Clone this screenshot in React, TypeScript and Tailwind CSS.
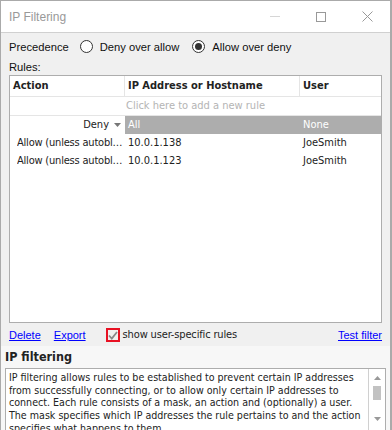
import React from "react";

const ui = { fontFamily: '"Liberation Sans", Arial, sans-serif' };
const tah = { fontFamily: '"DejaVu Sans Condensed", "DejaVu Sans", sans-serif' };

const TitleBar = () => (
  <div className="h-[32px] bg-white border-b border-[#d0d0d0] flex items-center shrink-0">
    <span className="pl-[8px] text-[12px] text-[#999]" style={ui}>
      IP Filtering
    </span>
    <div className="ml-auto flex items-center h-full">
      <div className="w-[46px] h-full flex items-center justify-center">
        <div className="w-[10px] h-px bg-[#d6d6d6]" />
      </div>
      <div className="w-[46px] h-full flex items-center justify-center">
        <div className="w-[10px] h-[10px] border border-[#999]" />
      </div>
      <div className="w-[46px] h-full flex items-center justify-center">
        <svg width="11" height="11" viewBox="0 0 11 11">
          <path d="M0.5 0.5 L10.5 10.5 M10.5 0.5 L0.5 10.5" stroke="#999" strokeWidth="1" />
        </svg>
      </div>
    </div>
  </div>
);

const Radio = ({ checked, label }: { checked: boolean; label: string }) => (
  <label className="flex items-center gap-[7px]">
    <span className="w-[13px] h-[13px] rounded-full border border-[#333] bg-white flex items-center justify-center">
      {checked && <span className="w-[7px] h-[7px] rounded-full bg-[#333]" />}
    </span>
    <span>{label}</span>
  </label>
);

type Rule = { action: string; ip: string; user: string };

const rules: Rule[] = [
  { action: "Allow (unless autoblocked)", ip: "10.0.1.138", user: "JoeSmith" },
  { action: "Allow (unless autoblocked)", ip: "10.0.1.123", user: "JoeSmith" },
];

const RulesTable = () => (
  <div className="h-[248px] bg-white border border-[#adadad] text-[11px] text-[#222] overflow-hidden" style={tah}>
    <div className="flex h-[21px] border-b border-[#e5e5e5] font-bold items-stretch">
      <div className="w-[115px] pl-[3px] flex items-center border-r border-[#e5e5e5]">Action</div>
      <div className="w-[175px] pl-[3px] flex items-center border-r border-[#e5e5e5]">IP Address or Hostname</div>
      <div className="flex-1 pl-[3px] flex items-center">User</div>
    </div>
    <div className="h-[19px] flex items-center justify-center text-[#b4b4b4] border-b border-[#e5e5e5]">
      Click here to add a new rule
    </div>
    <div className="flex h-[18px]">
      <div className="w-[115px] flex items-center justify-end pr-[4px] gap-[5px]">
        <span>Deny</span>
        <svg width="7" height="4" viewBox="0 0 7 4">
          <path d="M0 0 L7 0 L3.5 4 Z" fill="#777" />
        </svg>
      </div>
      <div className="flex-1 flex bg-[#adadad] text-white">
        <div className="w-[175px] pl-[3px] flex items-center">All</div>
        <div className="flex-1 pl-[3px] flex items-center">None</div>
      </div>
    </div>
    {rules.map((r, i) => (
      <div key={i} className="flex h-[18px]">
        <div className="w-[115px] pl-[7px] pr-[2px] flex items-center min-w-0">
          <span className="truncate tracking-[-0.2px]">{r.action}</span>
        </div>
        <div className="w-[175px] pl-[3px] flex items-center">{r.ip}</div>
        <div className="flex-1 pl-[3px] flex items-center">{r.user}</div>
      </div>
    ))}
  </div>
);

const Checkbox = () => (
  <span className="w-[14px] h-[14px] border-2 border-[#e81123] bg-[#f0f0f0] flex items-center justify-center">
    <svg width="10" height="9" viewBox="0 0 10 9">
      <path d="M1 4.5 L3.8 7.5 L9 1" stroke="#888" strokeWidth="1.8" fill="none" />
    </svg>
  </span>
);

const HelpBox = () => (
  <div className="flex-1 mx-[4px] bg-white border border-[#adadad] flex overflow-hidden">
    <p className="flex-1 pl-[3px] pr-[4px] pt-[2px] text-[10.6px] leading-[12.7px] text-[#222]" style={tah}>
      IP filtering allows rules to be established to prevent certain IP addresses from successfully
      connecting, or to allow only certain IP addresses to connect. Each rule consists of a mask, an
      action and (optionally) a user. The mask specifies which IP addresses the rule pertains to and
      the action specifies what happens to them.
    </p>
    <div className="w-[17px] border-l border-[#d0d0d0] flex flex-col items-center pt-[7px]">
      <svg width="7" height="4" viewBox="0 0 7 4">
        <path d="M0 4 L7 4 L3.5 0 Z" fill="#999" />
      </svg>
      <div className="w-[8px] h-[14px] bg-[#c2c2c2] mt-[6px]" />
      <svg className="mt-[17px]" width="7" height="4" viewBox="0 0 7 4">
        <path d="M0 0 L7 0 L3.5 4 Z" fill="#999" />
      </svg>
    </div>
  </div>
);

export default function App() {
  return (
    <div className="w-[392px] h-[430px] border-l border-r-2 border-t border-[#aaa] bg-[#f0f0f0] flex flex-col overflow-hidden">
      <TitleBar />
      <div className="px-[8px] flex flex-col" style={ui}>
        <div className="h-[24px] mt-[2px] flex items-center text-[11.2px] text-[#111]">
          <span className="mr-[11px]">Precedence</span>
          <Radio checked={false} label="Deny over allow" />
          <span className="w-[13px]" />
          <Radio checked={true} label="Allow over deny" />
        </div>
        <div className="h-[16px] text-[11.2px] leading-[16px] text-[#111]">Rules:</div>
        <RulesTable />
        <div className="h-[22px] mt-[1px] flex items-center text-[11px] text-[#222]" style={tah}>
          <a className="text-[#0000ff] underline" style={ui}>Delete</a>
          <a className="ml-[13px] text-[#0000ff] underline" style={ui}>Export</a>
          <span className="ml-[20px] flex items-center gap-[3px]">
            <Checkbox />
            <span className="tracking-[-0.15px]">show user-specific rules</span>
          </span>
          <a className="ml-auto text-[#0000ff] underline" style={ui}>Test filter</a>
        </div>
      </div>
      <div className="flex-1 bg-[#f7f7f7] flex flex-col">
        <div className="h-[22px] pl-[4px] flex items-center text-[12.5px] font-bold text-[#222]" style={tah}>
          IP filtering
        </div>
        <HelpBox />
      </div>
    </div>
  );
}
